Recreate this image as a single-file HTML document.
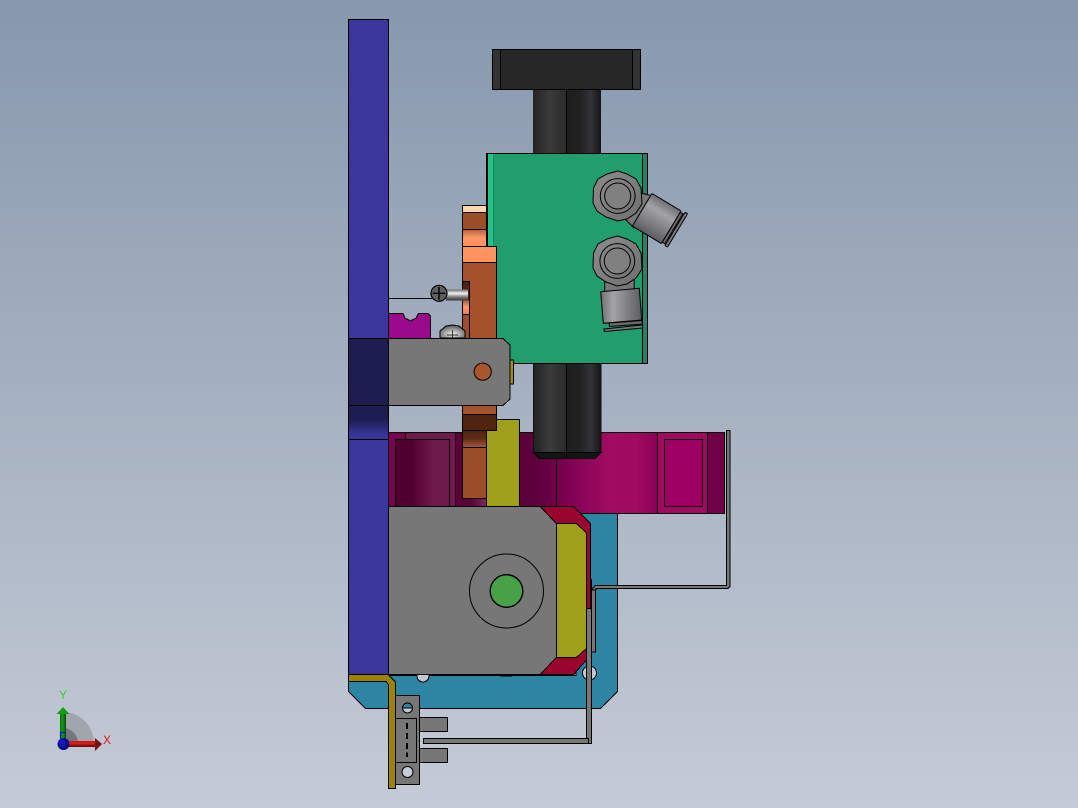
<!DOCTYPE html>
<html lang="en">
<head>
<meta charset="utf-8">
<title>CAD assembly view</title>
<style>
html,body{margin:0;padding:0;width:1078px;height:808px;overflow:hidden;background:#a5afbe}
svg{display:block}
</style>
</head>
<body>
<svg width="1078" height="808" viewBox="0 0 1078 808" xmlns="http://www.w3.org/2000/svg">
<defs>
<linearGradient id="bg" x1="0" y1="0" x2="0" y2="1"><stop offset="0" stop-color="#8798ad"/><stop offset="1" stop-color="#c5cbd6"/></linearGradient>
<linearGradient id="blueg" x1="0" y1="0" x2="0" y2="1"><stop offset="0" stop-color="#1c1c50"/><stop offset=".4" stop-color="#1c1c50"/><stop offset=".8" stop-color="#36338f"/><stop offset="1" stop-color="#3b369c"/></linearGradient>
<linearGradient id="org1" x1="0" y1="0" x2="0" y2="1"><stop offset="0" stop-color="#b4623a"/><stop offset=".5" stop-color="#ff9a6a"/><stop offset="1" stop-color="#ff8f58"/></linearGradient>
<linearGradient id="org2" x1="0" y1="0" x2="0" y2="1"><stop offset="0" stop-color="#50240f"/><stop offset=".5" stop-color="#602d15"/><stop offset="1" stop-color="#a8583a"/></linearGradient>
<linearGradient id="org3" x1="0" y1="0" x2="0" y2="1"><stop offset="0" stop-color="#a5522c"/><stop offset=".5" stop-color="#ff9a6a"/><stop offset="1" stop-color="#e47c4c"/></linearGradient>
<linearGradient id="mag" x1="0" y1="0" x2="1" y2="0"><stop offset="0" stop-color="#5a003a"/><stop offset=".15" stop-color="#5f003d"/><stop offset=".33" stop-color="#7c0050"/><stop offset=".65" stop-color="#a10b62"/><stop offset=".85" stop-color="#a00a60"/><stop offset="1" stop-color="#8c0058"/></linearGradient>
<linearGradient id="magin" x1="0" y1="0" x2="1" y2="0"><stop offset="0" stop-color="#50002f"/><stop offset=".3" stop-color="#50002f"/><stop offset=".7" stop-color="#6e1a4c"/><stop offset="1" stop-color="#6e1a4c"/></linearGradient>
<linearGradient id="magstrip" x1="0" y1="0" x2="1" y2="0"><stop offset="0" stop-color="#5a0038"/><stop offset=".5" stop-color="#5a0038"/><stop offset="1" stop-color="#7d2a60"/></linearGradient>
<linearGradient id="cylL" x1="0" y1="0" x2="1" y2="0"><stop offset="0" stop-color="#232323"/><stop offset=".5" stop-color="#3b3b3b"/><stop offset="1" stop-color="#2a2a2a"/></linearGradient>
<linearGradient id="cylR" x1="0" y1="0" x2="1" y2="0"><stop offset="0" stop-color="#1e1e1e"/><stop offset=".35" stop-color="#202020"/><stop offset=".7" stop-color="#333236"/><stop offset="1" stop-color="#141414"/></linearGradient>
<linearGradient id="shank" x1="0" y1="0" x2="0" y2="1"><stop offset="0" stop-color="#6a6a6a"/><stop offset=".35" stop-color="#f2f2f2"/><stop offset=".7" stop-color="#777"/><stop offset="1" stop-color="#333"/></linearGradient>
<radialGradient id="silver" cx=".5" cy=".7" r=".6"><stop offset="0" stop-color="#f0f0f0"/><stop offset="1" stop-color="#666"/></radialGradient>
<linearGradient id="hexg" x1="0" y1="0" x2="1" y2="1"><stop offset="0" stop-color="#8d8d8d"/><stop offset="1" stop-color="#6e6e6e"/></linearGradient>
<linearGradient id="fit" x1="0" y1="0" x2="1" y2="0"><stop offset="0" stop-color="#6f6f73"/><stop offset=".3" stop-color="#a3a3a5"/><stop offset=".75" stop-color="#77777b"/><stop offset="1" stop-color="#5b5b60"/></linearGradient>
<linearGradient id="fitV" x1="0" y1="0" x2="0" y2="1"><stop offset="0" stop-color="#6f6f73"/><stop offset=".3" stop-color="#a3a3a5"/><stop offset=".75" stop-color="#77777b"/><stop offset="1" stop-color="#5b5b60"/></linearGradient>
<linearGradient id="arrG" x1="0" y1="0" x2="1" y2="0"><stop offset="0" stop-color="#0b6b0b"/><stop offset=".4" stop-color="#12a012"/><stop offset="1" stop-color="#074a07"/></linearGradient>
<linearGradient id="arrR" x1="0" y1="0" x2="0" y2="1"><stop offset="0" stop-color="#c01515"/><stop offset=".4" stop-color="#e02020"/><stop offset="1" stop-color="#5a0808"/></linearGradient>
<radialGradient id="ball" cx=".4" cy=".4" r=".6"><stop offset="0" stop-color="#1a1ae0"/><stop offset="1" stop-color="#060670"/></radialGradient>
</defs>

<rect width="1078" height="808" fill="url(#bg)"/>

<!-- triad -->
<g>
<path d="M63 743V712A31 31 0 0 1 94 743Z" fill="#a0a5ae"/>
<path d="M63 743V728A15 15 0 0 1 78 743Z" fill="#74777c"/>
<rect x="60" y="713" width="6" height="30" fill="url(#arrG)"/>
<path d="M63 707L69.5 714H56.5Z" fill="#12a012"/>
<rect x="66" y="741" width="30" height="6" fill="url(#arrR)"/>
<path d="M102 744L95 738V751Z" fill="#7a1010"/>
<circle cx="63.5" cy="744" r="6" fill="url(#ball)"/>
<path d="M60.5 738V732.5H66" fill="none" stroke="#1515d0" stroke-width="1.2"/>
<text x="59" y="699" font-family="Liberation Sans, sans-serif" font-size="12" fill="#35d035">Y</text>
<text x="103" y="744" font-family="Liberation Sans, sans-serif" font-size="12" fill="#e01818">X</text>
</g>

<g shape-rendering="crispEdges" stroke="#000" stroke-width="1">
<!-- blue plate -->
<rect x="348.5" y="19.5" width="40" height="656" fill="#3b369c"/>
<rect x="348.5" y="338.5" width="40" height="67" fill="#1c1c50"/>
<rect x="348.5" y="405.5" width="40" height="34" fill="url(#blueg)"/>

<!-- magenta band -->
<rect x="388.5" y="432.5" width="168" height="74" fill="#7a0050"/>
<rect x="405.5" y="432.5" width="50" height="74" fill="#6e1a4c"/>
<rect x="395.5" y="439.5" width="54" height="67" fill="url(#magin)"/>
<rect x="455.5" y="432.5" width="40" height="66" fill="#5a0038" stroke="none"/>
<rect x="455.5" y="498.5" width="31" height="8" fill="url(#magstrip)" stroke="none"/>
<rect x="519.5" y="432.5" width="37" height="74" fill="#650040" stroke="none"/>
<rect x="519.5" y="432.5" width="138" height="81" fill="url(#mag)" stroke="none"/>
<path d="M388.5 432.5H724.5V513.5H530" fill="none"/>
<line x1="556.5" y1="458" x2="556.5" y2="513"/>
<rect x="657.5" y="432.5" width="50" height="81" fill="#a00a60"/>
<rect x="664.5" y="439.5" width="38" height="67" fill="#9c0060"/>
<rect x="707.5" y="432.5" width="17" height="81" fill="#720046"/>

<!-- teal base -->
<path d="M348.5 675.5V691.5L365.5 708.5H600.5L617.5 691.5V513.5H576V675.5Z" fill="#2e85a3"/>
<circle cx="589.5" cy="673" r="7" fill="#c2c8d3"/>
<circle cx="423" cy="676" r="6" fill="#c2c8d3"/>

<!-- lower cylinder -->
<path d="M533.5 363V452.5L539.5 458.5H595L601 452.5V363Z" fill="#222"/>
<rect x="533.5" y="363" width="33" height="89.5" fill="url(#cylL)" stroke="none"/>
<rect x="567" y="363" width="34" height="89.5" fill="url(#cylR)" stroke="none"/>
<path d="M533.5 452.5H601L595 458.5H539.5Z" fill="#141414"/>
<path d="M566.5 363V458" fill="none"/>
<path d="M533.5 363V452.5M601 363V452.5" fill="none" stroke="#111"/>

<!-- upper cylinder -->
<rect x="533" y="90" width="34" height="64" fill="url(#cylL)" stroke="none"/>
<rect x="567" y="90" width="34" height="64" fill="url(#cylR)" stroke="none"/>
<line x1="566.5" y1="90" x2="566.5" y2="154"/>

<!-- handle -->
<rect x="492.5" y="49.5" width="148" height="40" fill="#272727"/>
<rect x="492.5" y="49.5" width="8" height="40" fill="#333"/>
<rect x="632.5" y="49.5" width="8" height="40" fill="#333"/>

<!-- green block -->
<rect x="486.5" y="153.5" width="161" height="210" fill="#209e6e"/>
<rect x="488" y="154" width="6" height="209" fill="#26c184" stroke="none"/>
<rect x="642.5" y="153.5" width="5" height="210" fill="#2a7f66"/>
<line x1="487.5" y1="154" x2="487.5" y2="363"/>
<line x1="493.5" y1="154" x2="493.5" y2="363" stroke="#188a5e"/>

<!-- orange parts upper -->
<rect x="462.5" y="205.5" width="24" height="7" fill="#fdd6ae"/>
<rect x="462.5" y="212.5" width="24" height="17" fill="#9c4e29"/>
<rect x="462.5" y="229.5" width="24" height="17" fill="url(#org1)"/>
<rect x="462.5" y="262.5" width="34" height="76" fill="#a5522c"/>
<rect x="462.5" y="246.5" width="34" height="16" fill="#ff9460"/>
<rect x="462.5" y="281.5" width="7" height="18" fill="#4f2410"/>
<rect x="462.5" y="299.5" width="7" height="15" fill="url(#org3)"/>
<rect x="462.5" y="314.5" width="7" height="24" fill="#9c4e29"/>

<!-- olive + lower orange -->
<rect x="486.5" y="419.5" width="33" height="87" fill="#9f9f1b"/>
<rect x="462.5" y="405.5" width="34" height="9" fill="#a5522c"/>
<rect x="462.5" y="414.5" width="34" height="16" fill="#50240f"/>
<rect x="462.5" y="430.5" width="24" height="17" fill="url(#org2)"/>
<rect x="462.5" y="447.5" width="24" height="51" fill="#9c4e29"/>

<!-- purple clip -->
<path d="M388.5 338.5V313.5H403L405 318L410.5 321L416 318L418.5 313.5H428L430.5 316V338.5Z" fill="#9a0a8a"/>
<line x1="388.5" y1="298.5" x2="432" y2="298.5"/>
</g>

<!-- small screw -->
<path d="M440 338V331L446 326L452.5 325L459 326L465 331V338Z" fill="url(#silver)" stroke="#000"/>
<path d="M452.5 330V338M447 335L458 335" stroke="#333" fill="none"/>

<!-- bolt -->
<rect x="446" y="289.5" width="22" height="11" fill="url(#shank)"/>
<circle cx="439" cy="293.3" r="8" fill="#5f5f5f" stroke="#000" stroke-width="1.2"/>
<path d="M439 287V299.6M432.7 293.3H445.3" stroke="#000" stroke-width="1.4"/>

<g shape-rendering="crispEdges" stroke="#000" stroke-width="1">
<!-- arm -->
<rect x="510" y="360" width="3.5" height="24" fill="#9f8f1b"/>
<path d="M388.5 338.5H503L510 345V399L503 405.5H388.5Z" fill="#777"/>
</g>
<circle cx="482.7" cy="371.7" r="8.6" fill="#a9562c" stroke="#000" stroke-width="1"/>

<!-- fitting 1 -->
<g stroke="#000" stroke-width="1">
<path d="M636 192L653 196L634 228L626 220Z" fill="#79797c"/>
<g transform="translate(656.7,218.5) rotate(31)">
<rect x="-17" y="-19" width="34" height="38" rx="1" fill="url(#fitV)"/>
<rect x="17" y="-17.5" width="3" height="35" fill="#6a6a6e"/>
<rect x="21" y="-20" width="3" height="39" rx="1" fill="#77777a"/>
</g>
<path d="M617.7 171L627 174L636 179L641 188L642 204L636 213L627 219L617.7 221L606 217L597 211L593 203L593.5 188L598 179L607 174Z" fill="url(#hexg)"/>
<circle cx="617.7" cy="196" r="17.4" fill="none"/>
<circle cx="617.7" cy="196" r="13" fill="#808080"/>
</g>

<!-- fitting 2 -->
<g stroke="#000" stroke-width="1">
<rect x="604.7" y="278" width="29.5" height="15" fill="#77777a"/>
<path d="M600.7 291.7L639.3 288.3L641.7 320L603.3 323.3Z" fill="url(#fit)"/>
<path d="M609 323L642 320.5L642.5 324L609.5 326.5Z" fill="#6b6b6e"/>
<path d="M604 329L642.5 325L642.8 328L604.3 331.5Z" fill="#77777a"/>
<path d="M617.3 236L627 239L636 244L641 253L642 269L636 278L627 284L617.3 286L606 282L597 276L593 268L593.5 253L598 244L607 239Z" fill="url(#hexg)"/>
<circle cx="617.3" cy="261" r="17.4" fill="none"/>
<circle cx="617.3" cy="261" r="13" fill="#808080"/>
</g>

<g shape-rendering="crispEdges" stroke="#000" stroke-width="1">
<!-- red + yellow end of motor -->
<path d="M540 506.5H573.5L590.5 523.5V608.5H586.5V660L573.5 674.5H540Z" fill="#9a0530"/>
<path d="M556.5 523.5H576.5L586.5 533V648.5L576.5 657.5H556.5Z" fill="#9f9f1b"/>
<!-- motor -->
<path d="M388.5 506.5H540L556.5 523.5V657.5L540 674.5H388.5Z" fill="#777"/>
<!-- wire pieces -->
<rect x="591.5" y="590" width="4" height="62" fill="#777"/>
<rect x="586.5" y="608.5" width="5" height="135" fill="#777"/>
<path d="M591.5 590L595 585.5H726.5V430.5H730V586.5L728 588.5H596V590Z" fill="#777"/>
<rect x="590.5" y="579" width="1.5" height="12" fill="#000" stroke="none"/>
<rect x="492" y="674" width="28" height="1.5" fill="#000" stroke="none"/>
<rect x="500" y="675.5" width="12" height="1" fill="#000" stroke="none"/>

<!-- gold strip -->
<path d="M348.5 674.5H388L395.5 682V788.5H388.5V684.5L386 681.5H348.5Z" fill="#9c8208"/>

<!-- sensor bracket -->
<rect x="419.5" y="717.5" width="28" height="14" fill="#777"/>
<rect x="419.5" y="748.5" width="28" height="14" fill="#777"/>
<rect x="423.5" y="738.5" width="165" height="5" fill="#777"/>
<rect x="395.5" y="695.5" width="24" height="89" fill="#777"/>
<rect x="395.5" y="718.5" width="21" height="44" fill="#777"/>
<path d="M407 723V729M407 733V739M407 743V749M407 752.5V757" stroke-width="2"/>
</g>
<g stroke="#000" stroke-width="1">
<circle cx="407.5" cy="708" r="5" fill="#c2c8d3"/>
<path d="M402.5 708A5 5 0 0 1 412.5 708Z" fill="#2e85a3"/>
<circle cx="407.5" cy="772" r="5.5" fill="#c8ced8"/>
<!-- motor circles -->
<circle cx="506.5" cy="591" r="37" fill="none"/>
<circle cx="506.5" cy="591" r="16.3" fill="#47a146" stroke-width="1.4"/>
</g>
</svg>
</body>
</html>
